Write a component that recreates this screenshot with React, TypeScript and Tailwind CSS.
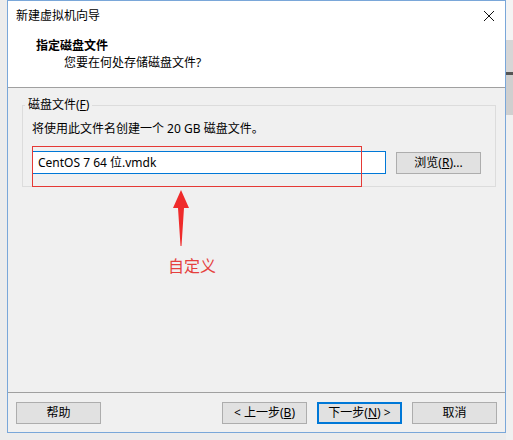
import React from "react";

const ui = { fontFamily: '"Noto Sans", "Noto Sans CJK SC", sans-serif' };

function Btn({ label, primary }: { label: React.ReactNode; primary?: boolean }) {
  return (
    <button
      className={
        "w-[85px] h-[22px] bg-[#e1e1e1] text-[12px] text-black flex items-center justify-center leading-none " +
        (primary ? "border-2 border-[#0078d7]" : "border border-[#adadad]")
      }
    >
      {label}
    </button>
  );
}

export default function App() {
  return (
    <div className="w-[513px] h-[440px] bg-[#ececec] flex overflow-hidden" style={ui}>
      <div className="ml-[7px] w-[499px] h-[433px] border border-[#7aa7d9] flex flex-col bg-[#f0f0f0] text-black">
        {/* title bar */}
        <div className="h-[30px] bg-white flex items-center justify-between pl-[8px] pr-[10px] text-[12px]">
          <span>新建虚拟机向导</span>
          <svg width="12" height="12" viewBox="0 0 12 12">
            <path d="M1 1L11 11M11 1L1 11" stroke="#111" strokeWidth="1" />
          </svg>
        </div>

        {/* header */}
        <div className="h-[57px] bg-white border-b border-[#a0a0a0] pl-[28px] pt-[6px] text-[12px]">
          <div className="font-bold leading-[18px]">指定磁盘文件</div>
          <div className="pl-[28px] leading-[16px]">您要在何处存储磁盘文件?</div>
        </div>

        {/* body */}
        <div className="flex-1 relative pl-[14px] pr-[9px] pt-[9px]">
          <fieldset className="border border-[#dcdcdc] h-[90px] pl-[9px] pr-[14px]">
            <legend className="text-[12px] px-[3px] -ml-[7px] leading-[16px]">
              磁盘文件(<span className="underline">F</span>)
            </legend>
            <div className="text-[12px] leading-[16px] mt-[8px]">将使用此文件名创建一个 20 GB 磁盘文件。</div>
            <div className="flex items-center mt-[14px] gap-[10px]">
              <div className="w-[354px] h-[23px] bg-white border border-[#0078d7] flex items-center pl-[5px] text-[12px]">
                CentOS 7 64 位.vmdk
              </div>
              <Btn
                label={
                  <span>
                    浏览(<span className="underline">R</span>)...
                  </span>
                }
              />
            </div>
          </fieldset>

          {/* red annotation */}
          <div className="absolute left-[24px] top-[58px] w-[330px] h-[41px] border border-[#e53935]" />
          <svg className="absolute left-[164px] top-[102px]" width="18" height="57" viewBox="0 0 18 57">
            <path d="M9 0L17 18L12 18L9.5 56L8.5 56L6 18L1 18Z" fill="#ef2b2b" />
          </svg>
          <span className="absolute left-[160px] top-[168px] text-[16px] text-[#e5403d] leading-[20px]">自定义</span>
        </div>

        {/* footer */}
        <div className="h-[40px] border-t border-[#a0a0a0] flex items-start pt-[9px] pl-[8px] pr-[8px]">
          <Btn label="帮助" />
          <div className="flex-1" />
          <div className="flex gap-[10px]">
            <Btn
              label={
                <span>
                  &lt; 上一步(<span className="underline">B</span>)
                </span>
              }
            />
            <Btn
              primary
              label={
                <span>
                  下一步(<span className="underline">N</span>) &gt;
                </span>
              }
            />
            <Btn label="取消" />
          </div>
        </div>
      </div>

      {/* background window edge */}
      <div className="flex-1 flex flex-col">
        <div className="h-[40px] bg-[#f4f4f4]" />
        <div className="h-[32px] bg-[#d6d6d6]" />
        <div className="h-[3px] bg-[#555]" />
        <div className="h-[40px] bg-[#cfcfcf]" />
        <div className="flex-1 bg-[#f0f0f0]" />
      </div>
    </div>
  );
}
